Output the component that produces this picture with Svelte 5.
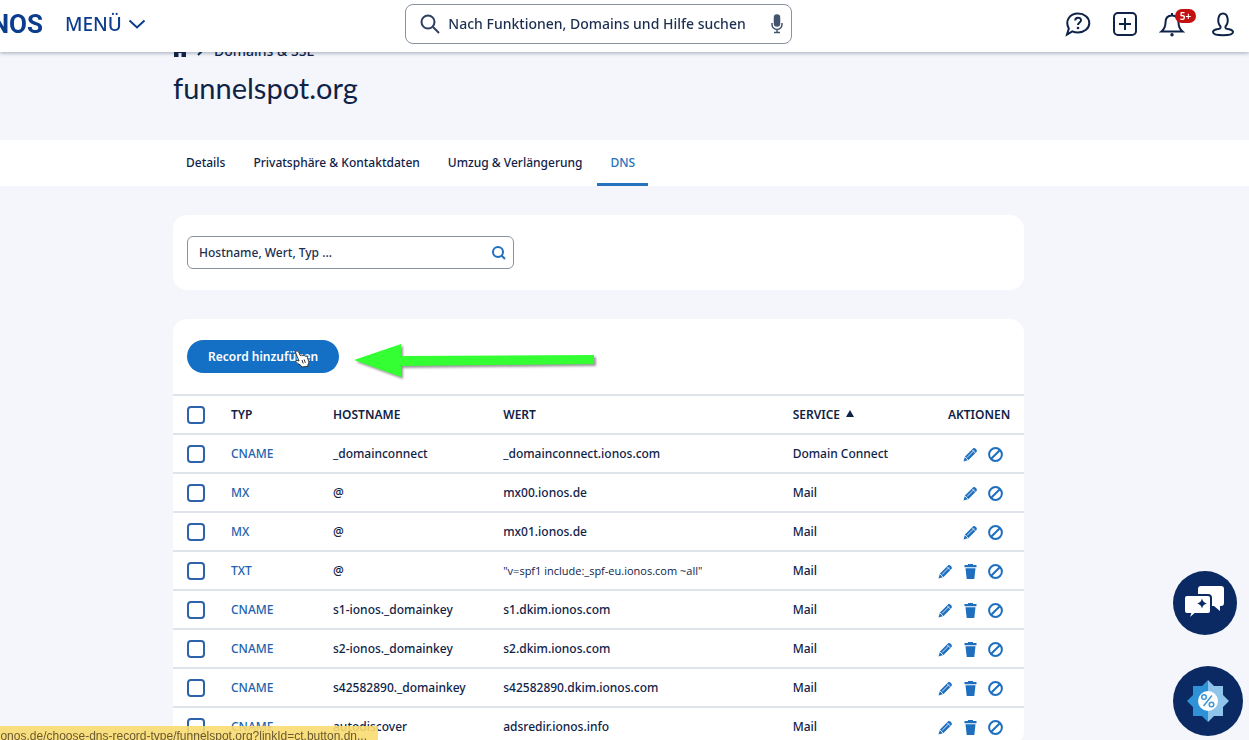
<script>
    const tabs = ['Details', 'Privatsphäre & Kontaktdaten', 'Umzug & Verlängerung', 'DNS'];
    let activeTab = 'DNS';
    let search = '';
    let filter = '';

    const records = [
        { type: 'CNAME', host: '_domainconnect', value: '_domainconnect.ionos.com', service: 'Domain Connect' },
        { type: 'MX', host: '@', value: 'mx00.ionos.de', service: 'Mail' },
        { type: 'MX', host: '@', value: 'mx01.ionos.de', service: 'Mail' },
        { type: 'TXT', host: '@', value: '"v=spf1 include:_spf-eu.ionos.com ~all"', service: 'Mail', removable: true },
        { type: 'CNAME', host: 's1-ionos._domainkey', value: 's1.dkim.ionos.com', service: 'Mail', removable: true },
        { type: 'CNAME', host: 's2-ionos._domainkey', value: 's2.dkim.ionos.com', service: 'Mail', removable: true },
        { type: 'CNAME', host: 's42582890._domainkey', value: 's42582890.dkim.ionos.com', service: 'Mail', removable: true },
        { type: 'CNAME', host: 'autodiscover', value: 'adsredir.ionos.info', service: 'Mail', removable: true }
    ];
</script>

<header>
    <a class="logo" href="#home"><span>IONOS</span></a>
    <button class="menu">
        MENÜ
        <svg width="18" height="10" viewBox="0 0 18 10"><path d="M1.5 1.5 9 8.5l7.5-7" /></svg>
    </button>
    <label class="search">
        <svg width="20" height="20" viewBox="0 0 20 20"><circle cx="8" cy="8" r="6.5" /><path d="m13 13 6 6" /></svg>
        <input type="text" aria-label="Suche" placeholder="Nach Funktionen, Domains und Hilfe suchen" bind:value={search} />
        <svg class="mic" width="12" height="20" viewBox="0 0 12 20">
            <rect class="solid" x="3.5" y="1" width="5" height="11" rx="2.5" />
            <path d="M1 9v1.500a5 5 0 0 0 10 0V9M6 15.500V18M3 18.500h6" />
        </svg>
    </label>
    <nav class="tools">
        <button aria-label="Hilfe">
            <svg width="26" height="26" viewBox="0 0 26 26">
                <path d="M3.800 17.500C-.5 9.500 5 2.500 13 2.500c6.300 0 11.300 4 11.300 9.500S19.300 21.500 13 21.500c-2.100 0-4-.4-5.700-1.200L2 23.500z" />
                <path d="M10.200 9.500c0-3.700 5.800-3.700 5.800-.2 0 2.300-3 2.300-3 4.800" />
                <circle class="solid" cx="13" cy="17" r="1.300" />
            </svg>
        </button>
        <button aria-label="Hinzufügen">
            <svg width="26" height="26" viewBox="0 0 26 26"><rect x="2" y="2" width="22" height="22" rx="4" /><path d="M13 7v12M7 13h12" /></svg>
        </button>
        <button class="bell" aria-label="Benachrichtigungen">
            <svg width="26" height="26" viewBox="0 0 26 26">
                <path d="M2.500 20.500c3.500-3 4-5 4-9C6.500 7 9 4.500 13 4.500s6.500 2.500 6.500 7c0 4 .5 6 4 9zM13 4.500V2" />
                <circle class="solid" cx="13" cy="23.700" r="1.700" />
            </svg>
            <span class="count">5+</span>
        </button>
        <button class="user" aria-label="Konto">
            <svg width="26" height="26" viewBox="0 0 26 26">
                <path d="M10.500 15.500C7 12 7.500 2.500 13 2.500s6 9.500 2.500 13c-.5 2 .5 2.300 3.500 2.800 3 .6 4 1.600 4 2.700 0 2-4 3.200-10 3.200S3 23 3 21c0-1.100 1-2.100 4-2.700 3-.5 4-.8 3.500-2.800z" />
            </svg>
        </button>
    </nav>
</header>

<main>
    <div class="wrap intro">
        <nav class="breadcrumb">
            <a href="#home" aria-label="Startseite">
                <svg width="14" height="14" viewBox="0 0 14 14"><path d="M7 1 0 7h1v7h4.500v-4h3v4H13V7h1z" /></svg>
            </a>
            <svg class="sep" width="7" height="12" viewBox="0 0 7 12"><path d="m1 1 5 5-5 5" /></svg>
            <a href="#domains">Domains &amp; SSL</a>
        </nav>
        <h1>funnelspot.org</h1>
    </div>

    <div class="tabbar">
        <nav class="wrap tabs">
            {#each tabs as tab}
                <a href="#{tab}" class:active={tab === activeTab}>{tab}</a>
            {/each}
        </nav>
    </div>

    <div class="wrap">
        <section class="card filter">
            <label>
                <input type="text" aria-label="Records filtern" placeholder="Hostname, Wert, Typ ..." bind:value={filter} />
                <svg width="14" height="14" viewBox="0 0 14 14"><circle cx="6" cy="6" r="5" /><path d="m9.500 9.500 3.500 3.500" /></svg>
            </label>
        </section>

        <section class="card">
            <div class="actions-bar">
                <button class="primary">
                    Record hinzufügen
                    <svg class="cursor" width="16" height="18" viewBox="0 0 16 18">
                        <path d="M2.200 1.200c1-.8 2 0 2.500 1l1.700 3.600c.8-1 1.900-.9 2.300.1.800-.8 1.900-.6 2.300.3 1-.5 1.900 0 2.300 1l1.400 4.300c.2 1.300-.3 2.500-.9 3.400l.2 1.500-6.200.6-.8-1.400-4.600-3.200c-1-.8-.6-2.200.8-2l1.800.6-3-7.200c-.4-1.100-.4-2 .2-2.600z" />
                        <path d="m8 10 1.200 3.500M10.200 9.500l1.100 3.300" />
                    </svg>
                </button>
                <svg class="arrow" width="248" height="42" viewBox="0 0 248 42">
                    <path d="M1 24 48 8v12l193-1v9L48 30v11z" />
                </svg>
            </div>
            <table>
                <thead>
                    <tr>
                        <th class="check"><input type="checkbox" aria-label="Alle auswählen" /></th>
                        <th class="type">TYP</th>
                        <th class="host">HOSTNAME</th>
                        <th class="value">WERT</th>
                        <th>SERVICE <svg class="sort" width="8" height="7" viewBox="0 0 8 7"><path d="M4 0 8 7H0z" /></svg></th>
                        <th class="right">AKTIONEN</th>
                    </tr>
                </thead>
                <tbody>
                    {#each records as record}
                        <tr>
                            <td class="check"><input type="checkbox" aria-label="{record.type} {record.value}" /></td>
                            <td><a href="#record">{record.type}</a></td>
                            <td>{record.host}</td>
                            <td class:small={record.type === 'TXT'}>{record.value}</td>
                            <td>{record.service}</td>
                            <td>
                                <div class="icons">
                                    <button aria-label="Bearbeiten">
                                        <svg width="15" height="15" viewBox="0 0 15 15">
                                            <path class="fill" d="M.5 14.500 2 9.500l8-8c1.500-1.600 5 1.700 3.500 3.500l-8 8z" />
                                            <path class="cut" d="m4 10.500 7-7M9.200 2.800l3.200 3.200M2 10l3 3" />
                                        </svg>
                                    </button>
                                    {#if record.removable}
                                        <button aria-label="Löschen">
                                            <svg width="15" height="15" viewBox="0 0 15 15">
                                                <path class="fill" d="M1.500 1H5V0h5v1h3.500v2.300h-12zM2.500 4.300h10L11.300 15H3.700z" />
                                            </svg>
                                        </button>
                                    {/if}
                                    <button aria-label="Deaktivieren">
                                        <svg width="15" height="15" viewBox="0 0 15 15"><circle cx="7.500" cy="7.500" r="6.400" /><path d="m3.200 11.800 8.600-8.600" /></svg>
                                    </button>
                                </div>
                            </td>
                        </tr>
                    {/each}
                </tbody>
            </table>
        </section>
    </div>
</main>

<div class="floating">
    <button class="chat" aria-label="Chat">
        <svg width="64" height="64" viewBox="0 0 64 64">
            <path d="M28 15h20c2 0 3 1 3 3v14c0 2-1 3-3 3h-1v5l-6-5H28c-2 0-3-1-3-3V18c0-2 1-3 3-3z" />
            <path class="front" d="M14 24h21c2 0 3 1 3 3v13c0 2-1 3-3 3H22l-7 6 2-6h-3c-2 0-3-1-3-3V27c0-2 1-3 3-3z" />
            <path class="star" d="M29 27.500q.8 4 4.800 5-4 1-4.800 5-.8-4-4.800-5 4-1 4.800-5z" />
        </svg>
    </button>
    <button class="offer" aria-label="Angebote">
        <svg width="70" height="70" viewBox="0 0 70 70">
            <path class="dark" d="M35 14l-6 6h-9v9l-6 6 6 6v9h9l6 6z" />
            <path class="light" d="M35 14l6 6h9v9l6 6-6 6v9h-9l-6 6z" />
            <circle cx="35" cy="35" r="10" fill="#fff" />
            <g class="percent"><circle cx="31" cy="31" r="2.300" /><circle cx="38.500" cy="38.500" r="2.300" /><path d="m30.500 40 8.500-10.500" /></g>
        </svg>
    </button>
</div>

<div class="status"><span>n.ionos.de/choose-dns-record-type/funnelspot.org?linkId=ct.button.dn...</span></div>

<style>
    :global(body) {
        background: #f4f6fb;
        color: #0f2348;
        font-family: 'Noto Sans', 'Open Sans', sans-serif;
        font-size: 12px;
        font-weight: 500;
        height: 100vh;
        overflow: hidden;
    }
    svg {
        display: block;
        fill: none;
        flex: none;
    }
    button {
        font: inherit;
        color: inherit;
        padding: 0;
        border: 0;
        background: none;
        cursor: pointer;
    }
    a {
        color: inherit;
        text-decoration: none;
    }
    input {
        font: inherit;
        color: inherit;
    }
    header {
        position: fixed;
        top: 0;
        left: 0;
        right: 0;
        z-index: 2;
        box-sizing: border-box;
        height: 52px;
        padding: 0 13px 5px 0;
        display: flex;
        align-items: center;
        background: #fff;
        box-shadow: 0 1px 4px rgba(30, 50, 80, 0.4);
    }
    .logo {
        width: 43px;
        display: flex;
        justify-content: flex-end;
        color: #0b3d8c;
        font-family: Roboto, sans-serif;
        font-size: 26px;
        font-weight: bold;
    }
    .menu {
        margin-left: 22px;
        display: flex;
        align-items: center;
        gap: 6px;
        color: #0b3d8c;
        font-size: 19px;
    }
    .menu svg {
        stroke: #0b3d8c;
        stroke-width: 2;
    }
    .search {
        flex: 0 1 387px;
        box-sizing: border-box;
        height: 40px;
        margin-left: 21%;
        padding: 0 8px 0 14px;
        display: flex;
        align-items: center;
        gap: 8px;
        border: 1px solid #8792a3;
        border-radius: 8px;
    }
    .search svg {
        stroke: #2d405f;
        stroke-width: 2;
    }
    .search .mic {
        color: #44546f;
        stroke: #44546f;
        stroke-width: 1.500;
    }
    .solid {
        fill: currentColor;
    }
    .search input {
        flex: 1;
        min-width: 0;
        padding: 0;
        border: 0;
        outline: 0;
        background: none;
        font-size: 14px;
    }
    input::placeholder {
        color: #1c2f50;
        opacity: 1;
    }
    .tools {
        margin-left: auto;
        display: flex;
        gap: 21px;
    }
    .tools svg {
        stroke: #0f2348;
        stroke-width: 2;
    }
    .tools .solid {
        stroke: none;
    }
    .user {
        margin-left: 4px;
    }
    .bell {
        position: relative;
    }
    .count {
        position: absolute;
        top: -2px;
        right: -11px;
        width: 21px;
        border-radius: 7px;
        background: #c4110f;
        color: #fff;
        font-size: 10px;
        font-weight: 600;
        line-height: 14px;
        text-align: center;
    }
    main {
        padding-top: 40px;
    }
    .wrap {
        margin: 0 18% 0 173px;
    }
    .intro {
        padding-bottom: 32px;
    }
    .breadcrumb {
        display: flex;
        align-items: center;
        gap: 10px;
        height: 20px;
        font-size: 14px;
    }
    .breadcrumb svg {
        fill: #0f2348;
    }
    .breadcrumb .sep {
        fill: none;
        stroke: #0f2348;
        stroke-width: 2;
    }
    h1 {
        margin: 8px 0 0;
        font-family: Lato, sans-serif;
        font-size: 29px;
        font-weight: 400;
        line-height: 40px;
    }
    .tabbar {
        margin-bottom: 29px;
        background: #fff;
    }
    .tabs {
        display: flex;
        gap: 2px;
    }
    .tabs a {
        padding: 2px 13px 0;
        border-bottom: 3px solid transparent;
        line-height: 41px;
        white-space: nowrap;
    }
    .tabs .active {
        color: #2672bd;
        border-color: #2672bd;
    }
    .card {
        border-radius: 14px;
        background: #fff;
        overflow: hidden;
    }
    .filter {
        margin-bottom: 29px;
        padding: 21px 14px;
    }
    .filter label {
        box-sizing: border-box;
        display: flex;
        align-items: center;
        width: 327px;
        height: 33px;
        padding: 0 7px 0 11px;
        border: 1px solid #8792a3;
        border-radius: 6px;
    }
    .filter input {
        flex: 1;
        padding: 0;
        border: 0;
        outline: 0;
    }
    .filter svg {
        stroke: #1f6fbf;
        stroke-width: 2;
    }
    .actions-bar {
        display: flex;
        align-items: center;
        gap: 14px;
        padding: 21px 14px;
    }
    .primary {
        position: relative;
        padding: 0 21px;
        height: 33px;
        border-radius: 17px;
        background: #1470c4;
        color: #fff;
        font-weight: 600;
        white-space: nowrap;
    }
    .cursor {
        position: absolute;
        right: 29px;
        top: 10px;
        fill: #fff;
        stroke: #333;
    }
    .arrow {
        margin: -4px 0 -5px;
        fill: #3f3;
        filter: drop-shadow(2px 2px 1px rgba(0, 0, 0, 0.4));
    }
    table {
        width: 100%;
        table-layout: fixed;
        border-collapse: collapse;
    }
    th,
    td {
        height: 37px;
        padding: 0;
        border-top: 2px solid #dfe4ea;
        text-align: left;
        white-space: nowrap;
    }
    th {
        font-weight: 600;
    }
    .check {
        width: 44px;
        padding-left: 14px;
    }
    .type {
        width: 102px;
    }
    .host {
        width: 20%;
    }
    .value {
        width: 34%;
    }
    .right {
        padding-right: 14px;
        text-align: right;
    }
    td a {
        color: #2361ae;
    }
    .small {
        font-family: 'Open Sans', 'Noto Sans', sans-serif;
        font-size: 11px;
        font-weight: 400;
    }
    input[type='checkbox'] {
        appearance: none;
        display: block;
        width: 18px;
        height: 18px;
        margin: 0;
        border: 2px solid #2e62aa;
        border-radius: 4px;
        box-sizing: border-box;
    }
    .sort {
        display: inline-block;
        margin: 0 0 2px 3px;
        fill: #0f2348;
    }
    .icons {
        display: flex;
        justify-content: flex-end;
        gap: 10px;
        padding: 2px 21px 0 0;
    }
    .icons svg {
        stroke: #1f6fbf;
        stroke-width: 2;
    }
    .icons .fill {
        fill: #1f6fbf;
        stroke: none;
    }
    .icons .cut {
        stroke: #fff;
        stroke-width: 0.800;
    }
    .floating {
        position: fixed;
        right: 6px;
        bottom: 4px;
        display: flex;
        flex-direction: column;
        gap: 31px;
    }
    .floating button {
        border-radius: 50%;
        background: #0b2a63;
    }
    .chat {
        width: 64px;
        height: 64px;
    }
    .chat svg {
        fill: #fff;
    }
    .front {
        stroke: #0b2a63;
        stroke-width: 2;
    }
    .chat .star {
        fill: #0b2a63;
    }
    .dark {
        fill: #2f92d6;
    }
    .light {
        fill: #8fc5ea;
    }
    .percent {
        stroke: #3f97d6;
        stroke-width: 1.500;
    }
    .status {
        position: fixed;
        left: 0;
        bottom: 0;
        box-sizing: border-box;
        display: flex;
        justify-content: flex-end;
        width: 378px;
        height: 14px;
        padding-right: 11px;
        overflow: hidden;
        background: rgba(250, 219, 112, 0.9);
        color: #6a5a33;
        font-family: 'Liberation Sans', sans-serif;
        font-size: 12px;
        font-weight: 400;
        line-height: 20px;
        white-space: nowrap;
    }
</style>
